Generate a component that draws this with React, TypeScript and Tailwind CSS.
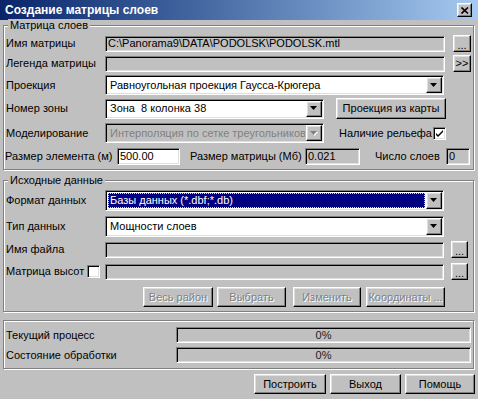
import React from 'react'

// classic 3D borders
const sunken =
  'border border-t-[#808080] border-l-[#808080] border-b-white border-r-white shadow-[inset_1px_1px_0_#000,inset_-1px_-1px_0_#dfdfdf]'
const raised =
  'border border-t-white border-l-white border-b-black border-r-black shadow-[inset_-1px_-1px_0_#808080,inset_1px_1px_0_#dfdfdf]'
const etched = 'border border-[#808080] shadow-[inset_1px_1px_0_#fff,1px_1px_0_#fff]'

function Field({ className = '', white = false, children }: { className?: string; white?: boolean; children?: React.ReactNode }) {
  return (
    <div className={`${sunken} ${white ? 'bg-white' : 'bg-[#c0c0c0]'} h-[16px] shrink-0 flex items-center px-[2px] overflow-hidden whitespace-nowrap ${className}`}>
      {children}
    </div>
  )
}

function Arrow({ disabled = false }: { disabled?: boolean }) {
  return (
    <div className={`${raised} bg-[#c0c0c0] w-[16px] h-full shrink-0 flex items-center justify-center`}>
      <svg width="8" height="5" viewBox="0 0 8 5">
        {disabled && <polygon points="1,1 8,1 4.5,5" fill="#fff" />}
        <polygon points="0,0 7,0 3.5,4" fill={disabled ? '#808080' : '#000'} />
      </svg>
    </div>
  )
}

type ComboKind = 'white' | 'disabled' | 'selected'

function Combo({ className = '', kind = 'white', children }: { className?: string; kind?: ComboKind; children?: React.ReactNode }) {
  return (
    <div className={`${sunken} ${kind === 'disabled' ? 'bg-[#c0c0c0]' : 'bg-white'} h-[20px] shrink-0 flex p-[1px] ${className}`}>
      <div className="flex-1 min-w-0 flex p-[1px]">
        {kind === 'selected' ? (
          <div className="flex-1 bg-[#000080] text-white border border-dotted border-[#e0e0a0] flex items-center px-[1px] whitespace-nowrap overflow-hidden">
            {children}
          </div>
        ) : (
          <div className={`flex-1 flex items-center px-[2px] whitespace-nowrap overflow-hidden ${kind === 'disabled' ? 'text-[#808080]' : ''}`}>
            {children}
          </div>
        )}
      </div>
      <Arrow disabled={kind === 'disabled'} />
    </div>
  )
}

function Button({ className = '', disabled = false, children }: { className?: string; disabled?: boolean; children?: React.ReactNode }) {
  return (
    <div
      className={`${raised} bg-[#c0c0c0] shrink-0 flex items-center justify-center whitespace-nowrap ${
        disabled ? 'text-[#808080] [text-shadow:1px_1px_0_#fff]' : ''
      } ${className}`}
    >
      {children}
    </div>
  )
}

function Check({ checked = false, className = '' }: { checked?: boolean; className?: string }) {
  return (
    <div className={`${sunken} bg-white w-[13px] h-[13px] shrink-0 flex items-center justify-center ${className}`}>
      {checked && (
        <svg width="7" height="7" viewBox="0 0 7 7">
          <path d="M0 3 L0 5 L2 7 L7 2 L7 0 L2 5 Z" fill="#000" />
        </svg>
      )}
    </div>
  )
}

function Label({ className = '', children }: { className?: string; children: React.ReactNode }) {
  return <span className={`shrink-0 whitespace-nowrap ${className}`}>{children}</span>
}

export default function App() {
  return (
    <div className="w-[478px] h-[399px] overflow-hidden bg-[#c0c0c0] text-[11px] leading-[13px] text-black font-['Liberation_Sans',Arial,sans-serif]">
      {/* Заголовок */}
      <div className="h-[20px] flex items-center pl-[5px] pr-[6px] bg-linear-to-r from-[#0a246a] to-[#a6caf0]">
        <span className="text-white font-bold text-[12px]">Создание матрицы слоев</span>
        <div className={`${raised} ml-auto w-[15px] h-[14px] bg-[#c0c0c0] flex items-center justify-center`}>
          <svg width="8" height="7" viewBox="0 0 8 7">
            <path d="M0.5 0.5 L7 6.5 M7 0.5 L0.5 6.5" stroke="#000" strokeWidth="1.6" />
          </svg>
        </div>
      </div>

      <div className="pl-[3px] pr-[4px]">
        {/* Матрица слоев */}
        <fieldset className={`${etched} px-[2px] pb-[4px] -mt-[1px] min-w-0`}>
          <legend className="ml-[2px] px-[2px] bg-[#c0c0c0] leading-[12px]">Матрица слоев</legend>

          <div className="flex items-center h-[17px] mt-[4px]">
            <Label className="w-[99px]">Имя матрицы</Label>
            <Field className="w-[340px]">C:\Panorama9\DATA\PODOLSK\PODOLSK.mtl</Field>
            <Button className="ml-[8px] w-[18px] h-[17px] items-end pb-[2px] leading-[8px]">...</Button>
          </div>

          <div className="flex items-center h-[17px] mt-[3px]">
            <Label className="w-[99px]">Легенда матрицы</Label>
            <Field className="w-[340px]" />
            <Button className="ml-[8px] w-[18px] h-[17px]">&gt;&gt;</Button>
          </div>

          <div className="flex items-center h-[20px] mt-[3px]">
            <Label className="w-[99px]">Проекция</Label>
            <Combo className="w-[339px]">Равноугольная проекция Гаусса-Крюгера</Combo>
          </div>

          <div className="flex items-center h-[21px] mt-[3px]">
            <Label className="w-[99px]">Номер зоны</Label>
            <Combo className="w-[219px]">Зона&nbsp; 8 колонка 38</Combo>
            <Button className="ml-[12px] w-[110px] h-[21px]">Проекция из карты</Button>
          </div>

          <div className="flex items-center h-[20px] mt-[4px]">
            <Label className="w-[99px]">Моделирование</Label>
            <Combo className="w-[219px]" kind="disabled">Интерполяция по сетке треугольников</Combo>
            <Label className="ml-[15px] w-[94px]">Наличие рельефа</Label>
            <Check checked />
          </div>

          <div className="flex items-center h-[17px] mt-[5px]">
            <Label className="w-[111px] -ml-[1px] mr-[1px]">Размер элемента (м)</Label>
            <Field white className="w-[63px] h-[17px]">500.00</Field>
            <Label className="ml-[10px] w-[115px]">Размер матрицы (Мб)</Label>
            <Field className="w-[55px] h-[17px]">0.021</Field>
            <Label className="ml-[15px] w-[71px]">Число слоев</Label>
            <Field className="w-[24px] h-[17px]">0</Field>
          </div>
        </fieldset>

        {/* Исходные данные */}
        <fieldset className={`${etched} px-[2px] pb-[4px] mt-[4px] min-w-0`}>
          <legend className="ml-[2px] px-[2px] bg-[#c0c0c0] leading-[12px]">Исходные данные</legend>

          <div className="flex items-center h-[21px] mt-[4px]">
            <Label className="w-[99px]">Формат данных</Label>
            <Combo className="w-[339px] h-[21px]" kind="selected">Базы данных (*.dbf;*.db)</Combo>
          </div>

          <div className="flex items-center h-[21px] mt-[5px]">
            <Label className="w-[99px]">Тип данных</Label>
            <Combo className="w-[339px] h-[21px]">Мощности слоев</Combo>
          </div>

          <div className="flex items-center h-[17px] mt-[4px]">
            <Label className="w-[99px]">Имя файла</Label>
            <Field className="w-[339px]" />
            <Button className="ml-[7px] w-[17px] h-[17px] items-end pb-[2px] leading-[8px]">...</Button>
          </div>

          <div className="flex items-center h-[17px] mt-[5px]">
            <Label className="w-[81px]">Матрица высот</Label>
            <Check />
            <Field className="ml-[5px] w-[339px]" />
            <Button className="ml-[7px] w-[17px] h-[17px] items-end pb-[2px] leading-[8px]">...</Button>
          </div>

          <div className="flex items-center h-[20px] mt-[7px]">
            <Button disabled className="ml-[137px] w-[70px] h-[20px]">Весь район</Button>
            <Button disabled className="ml-[4px] w-[69px] h-[20px]">Выбрать</Button>
            <Button disabled className="ml-[7px] w-[68px] h-[20px]">Изменить</Button>
            <Button disabled className="ml-[5px] w-[79px] h-[20px]">Координаты ...</Button>
          </div>
        </fieldset>

        {/* Процесс */}
        <div className={`${etched} mt-[8px] px-[2px] pt-[6px] pb-[5px]`}>
          <div className="flex items-center h-[16px]">
            <Label className="w-[170px]">Текущий процесс</Label>
            <div className={`${sunken} w-[295px] h-[16px] flex items-center justify-center text-[#202020]`}>0%</div>
          </div>
          <div className="flex items-center h-[16px] mt-[4px]">
            <Label className="w-[170px]">Состояние обработки</Label>
            <div className={`${sunken} w-[295px] h-[16px] flex items-center justify-center text-[#202020]`}>0%</div>
          </div>
        </div>

        <div className="flex justify-end mt-[5px] -mr-[1px]">
          <Button className="w-[72px] h-[20px]">Построить</Button>
          <Button className="ml-[4px] w-[71px] h-[20px]">Выход</Button>
          <Button className="ml-[4px] w-[70px] h-[20px]">Помощь</Button>
        </div>
      </div>
    </div>
  )
}
